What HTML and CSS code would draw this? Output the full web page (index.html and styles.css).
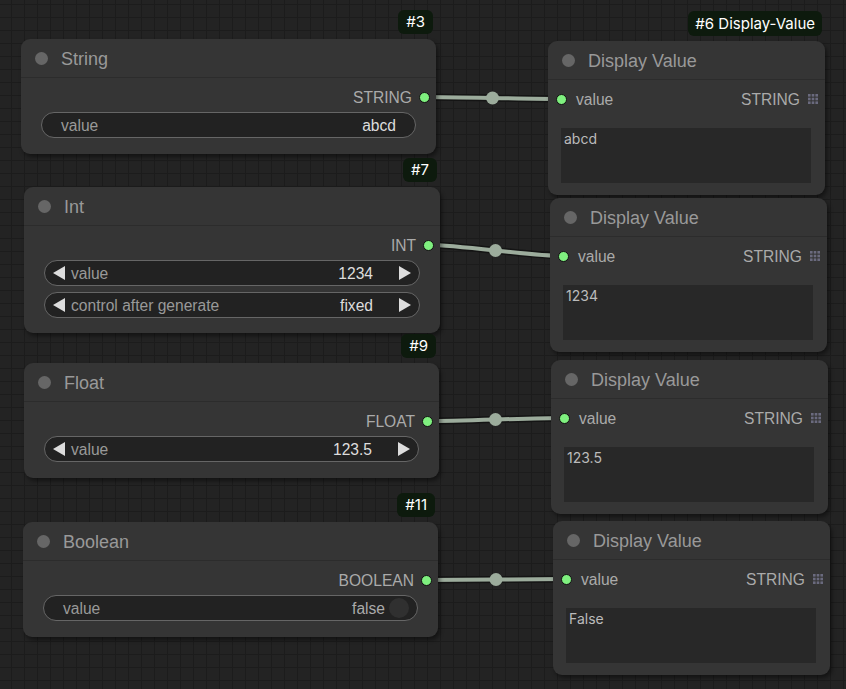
FILE: index.html
```html
<!DOCTYPE html>
<html>
<head>
<meta charset="utf-8">
<link rel="stylesheet" href="styles.css">
</head>
<body>
<div class="canvas">
  <svg class="links" width="846" height="689" viewBox="0 0 846 689">
    <g class="link-shadow">
      <path d="M424.5 97 C458 97, 527 99, 561 99"/>
      <path d="M428.5 245 C462 245, 529 256, 563 256"/>
      <path d="M427.5 421 C462 421, 530 418, 564 418"/>
      <path d="M426.5 580 C461 580, 531 579, 566 579"/>
    </g>
    <g class="link-line">
      <path d="M424.5 97 C458 97, 527 99, 561 99"/>
      <path d="M428.5 245 C462 245, 529 256, 563 256"/>
      <path d="M427.5 421 C462 421, 530 418, 564 418"/>
      <path d="M426.5 580 C461 580, 531 579, 566 579"/>
    </g>
    <g class="link-mid">
      <circle cx="492.5" cy="98" r="6.5"/>
      <circle cx="495.5" cy="250.5" r="6.5"/>
      <circle cx="495.5" cy="419.5" r="6.5"/>
      <circle cx="496" cy="579.5" r="6.5"/>
    </g>
  </svg>

  <!-- String -->
  <div class="node n-string">
    <div class="badge">#3</div>
    <div class="node-title"><span class="tdot"></span><span>String</span></div>
    <div class="node-body">
      <div class="out-row"><span class="txt">STRING</span><span class="slot"></span></div>
      <div class="widget text-widget"><span class="w-label">value</span><span class="w-value">abcd</span></div>
    </div>
  </div>

  <!-- Int -->
  <div class="node n-int">
    <div class="badge">#7</div>
    <div class="node-title"><span class="tdot"></span><span>Int</span></div>
    <div class="node-body body-int">
      <div class="out-row"><span class="txt">INT</span><span class="slot"></span></div>
      <div class="widget num-widget"><span class="arrow left"></span><span class="w-label">value</span><span class="w-value">1234</span><span class="arrow right"></span></div>
      <div class="widget num-widget"><span class="arrow left"></span><span class="w-label">control after generate</span><span class="w-value">fixed</span><span class="arrow right"></span></div>
    </div>
  </div>

  <!-- Float -->
  <div class="node n-float">
    <div class="badge">#9</div>
    <div class="node-title"><span class="tdot"></span><span>Float</span></div>
    <div class="node-body">
      <div class="out-row"><span class="txt">FLOAT</span><span class="slot"></span></div>
      <div class="widget num-widget"><span class="arrow left"></span><span class="w-label">value</span><span class="w-value">123.5</span><span class="arrow right"></span></div>
    </div>
  </div>

  <!-- Boolean -->
  <div class="node n-bool">
    <div class="badge">#11</div>
    <div class="node-title"><span class="tdot"></span><span>Boolean</span></div>
    <div class="node-body">
      <div class="out-row"><span class="txt">BOOLEAN</span><span class="slot"></span></div>
      <div class="widget bool-widget"><span class="w-label">value</span><span class="w-off">false</span><span class="toggle"></span></div>
    </div>
  </div>

  <!-- Display Values -->
  <div class="node dv dv1">
    <div class="badge">#6 Display-Value</div>
    <div class="node-title"><span class="tdot"></span><span>Display Value</span></div>
    <div class="node-body dv-body">
      <div class="in-row"><span class="slot"></span><span class="in-label txt">value</span><span class="in-type txt">STRING</span>
        <svg class="gridicon" width="10" height="10" viewBox="0 0 10 10"><rect x="0" y="0" width="2.6" height="2.6"/><rect x="3.7" y="0" width="2.6" height="2.6"/><rect x="7.4" y="0" width="2.6" height="2.6"/><rect x="0" y="3.7" width="2.6" height="2.6"/><rect x="3.7" y="3.7" width="2.6" height="2.6"/><rect x="7.4" y="3.7" width="2.6" height="2.6"/><rect x="0" y="7.4" width="2.6" height="2.6"/><rect x="3.7" y="7.4" width="2.6" height="2.6"/><rect x="7.4" y="7.4" width="2.6" height="2.6"/></svg>
      </div>
      <div class="textbox">abcd</div>
    </div>
  </div>

  <div class="node dv dv2">
    <div class="node-title"><span class="tdot"></span><span>Display Value</span></div>
    <div class="node-body dv-body">
      <div class="in-row"><span class="slot"></span><span class="in-label txt">value</span><span class="in-type txt">STRING</span>
        <svg class="gridicon" width="10" height="10" viewBox="0 0 10 10"><rect x="0" y="0" width="2.6" height="2.6"/><rect x="3.7" y="0" width="2.6" height="2.6"/><rect x="7.4" y="0" width="2.6" height="2.6"/><rect x="0" y="3.7" width="2.6" height="2.6"/><rect x="3.7" y="3.7" width="2.6" height="2.6"/><rect x="7.4" y="3.7" width="2.6" height="2.6"/><rect x="0" y="7.4" width="2.6" height="2.6"/><rect x="3.7" y="7.4" width="2.6" height="2.6"/><rect x="7.4" y="7.4" width="2.6" height="2.6"/></svg>
      </div>
      <div class="textbox">1234</div>
    </div>
  </div>

  <div class="node dv dv3">
    <div class="node-title"><span class="tdot"></span><span>Display Value</span></div>
    <div class="node-body dv-body">
      <div class="in-row"><span class="slot"></span><span class="in-label txt">value</span><span class="in-type txt">STRING</span>
        <svg class="gridicon" width="10" height="10" viewBox="0 0 10 10"><rect x="0" y="0" width="2.6" height="2.6"/><rect x="3.7" y="0" width="2.6" height="2.6"/><rect x="7.4" y="0" width="2.6" height="2.6"/><rect x="0" y="3.7" width="2.6" height="2.6"/><rect x="3.7" y="3.7" width="2.6" height="2.6"/><rect x="7.4" y="3.7" width="2.6" height="2.6"/><rect x="0" y="7.4" width="2.6" height="2.6"/><rect x="3.7" y="7.4" width="2.6" height="2.6"/><rect x="7.4" y="7.4" width="2.6" height="2.6"/></svg>
      </div>
      <div class="textbox">123.5</div>
    </div>
  </div>

  <div class="node dv dv4">
    <div class="node-title"><span class="tdot"></span><span>Display Value</span></div>
    <div class="node-body dv-body">
      <div class="in-row"><span class="slot"></span><span class="in-label txt">value</span><span class="in-type txt">STRING</span>
        <svg class="gridicon" width="10" height="10" viewBox="0 0 10 10"><rect x="0" y="0" width="2.6" height="2.6"/><rect x="3.7" y="0" width="2.6" height="2.6"/><rect x="7.4" y="0" width="2.6" height="2.6"/><rect x="0" y="3.7" width="2.6" height="2.6"/><rect x="3.7" y="3.7" width="2.6" height="2.6"/><rect x="7.4" y="3.7" width="2.6" height="2.6"/><rect x="0" y="7.4" width="2.6" height="2.6"/><rect x="3.7" y="7.4" width="2.6" height="2.6"/><rect x="7.4" y="7.4" width="2.6" height="2.6"/></svg>
      </div>
      <div class="textbox">False</div>
    </div>
  </div>
</div>
</body>
</html>
```

FILE: styles.css
```css
html, body {
  margin: 0;
  padding: 0;
  background: #222;
}

.canvas {
  position: relative;
  width: 846px;
  height: 689px;
  overflow: hidden;
  background-color: #232323;
  background-image:
    linear-gradient(#1c1c1c 1px, transparent 1px),
    linear-gradient(90deg, #1c1c1c 1px, transparent 1px);
  background-size: 13px 13px;
  background-position: 11px 4px;
  font-family: "Liberation Sans", Arial, sans-serif;
}

.links {
  position: absolute;
  left: 0;
  top: 0;
}

.link-shadow path {
  fill: none;
  stroke: #141414;
  stroke-width: 7;
}

.link-line path {
  fill: none;
  stroke: #9cac9c;
  stroke-width: 4;
}

.link-mid circle {
  fill: #9cac9c;
}

.node {
  position: absolute;
  background: #353535;
  border-radius: 9px;
  box-shadow: 2px 3px 4px rgba(0, 0, 0, 0.45);
  box-sizing: border-box;
}

.n-string { left: 21px; top: 39px; width: 415px; }
.n-int { left: 24px; top: 187px; width: 416px; }
.n-float { left: 24px; top: 363px; width: 415px; }
.n-bool { left: 23px; top: 522px; width: 415px; }
.dv1 { left: 548px; top: 41px; width: 277px; }
.dv2 { left: 550px; top: 198px; width: 277px; }
.dv3 { left: 551px; top: 360px; width: 277px; }
.dv4 { left: 553px; top: 521px; width: 277px; }

.badge {
  position: absolute;
  right: 3px;
  top: -29px;
  height: 24px;
  padding: 0 8px;
  background: #0d1a0d;
  border-radius: 6px;
  color: #fff;
  font-family: Inter, "Liberation Sans", sans-serif;
  font-size: 15px;
  line-height: 24px;
  white-space: nowrap;
}

.dv1 .badge {
  top: -30px;
  height: 25px;
  line-height: 25px;
  padding: 0 7px;
}

.node-title {
  height: 39px;
  box-sizing: border-box;
  display: flex;
  align-items: center;
  gap: 13px;
  padding-left: 14px;
  padding-top: 1px;
  border-bottom: 1px solid #2c2c2c;
  font-size: 18px;
  color: #999;
}

.node-title span + span {
  padding-top: 2px;
}

.tdot {
  width: 13px;
  height: 13px;
  border-radius: 50%;
  background: #666;
  flex: none;
}

.node-body {
  display: flex;
  flex-direction: column;
  padding: 8px 0 16px;
}

.body-int {
  padding-bottom: 15px;
}

.out-row {
  height: 22px;
  display: flex;
  justify-content: flex-end;
  align-items: center;
  gap: 7px;
  padding-right: 6px;
  font-size: 15.6px;
  color: #aaa;
}

.txt {
  padding-top: 2px;
}

.slot {
  width: 9px;
  height: 9px;
  border-radius: 50%;
  background: #7ff07f;
  border: 1px solid #111;
  flex: none;
}

.widget {
  margin: 4px 20px 0;
  height: 26px;
  box-sizing: border-box;
  border: 1px solid #666;
  border-radius: 13px;
  background: #222;
  display: flex;
  align-items: center;
  font-size: 15.6px;
}

.widget + .widget {
  margin-top: 6px;
}

.w-label {
  flex: 1;
  color: #999;
  white-space: nowrap;
  padding-top: 2px;
}

.w-value {
  color: #ddd;
  white-space: nowrap;
  padding-top: 2px;
}

.text-widget {
  padding: 0 19px;
}

.num-widget {
  padding: 0 8px;
}

.num-widget .w-label {
  margin-left: 6px;
}

.arrow {
  width: 12px;
  height: 14px;
  background: #ddd;
  flex: none;
}

.arrow.left {
  clip-path: polygon(0 50%, 100% 0, 100% 100%);
}

.arrow.right {
  margin-left: 26px;
  clip-path: polygon(0 0, 100% 50%, 0 100%);
}

.bool-widget {
  padding: 0 8px 0 19px;
}

.w-off {
  color: #aaa;
  padding-top: 2px;
}

.toggle {
  width: 20px;
  height: 20px;
  border-radius: 50%;
  background: #303030;
  margin-left: 4px;
  flex: none;
}

.dv-body {
  padding: 8px 0 12px;
}

.in-row {
  height: 22px;
  display: flex;
  align-items: center;
  padding: 0 7px 0 8px;
  font-size: 15.6px;
  color: #aaa;
}

.in-label {
  margin-left: 9px;
  flex: 1;
}

.in-type {
  margin-right: 8px;
}

.gridicon rect {
  fill: #6a6a7e;
}

.textbox {
  margin: 18px 14px 0 13px;
  height: 55px;
  box-sizing: border-box;
  background: #282828;
  padding: 2px 3px;
  font-family: Inter, "Liberation Sans", sans-serif;
  font-size: 14px;
  line-height: 17px;
  color: #bbb;
}
```
